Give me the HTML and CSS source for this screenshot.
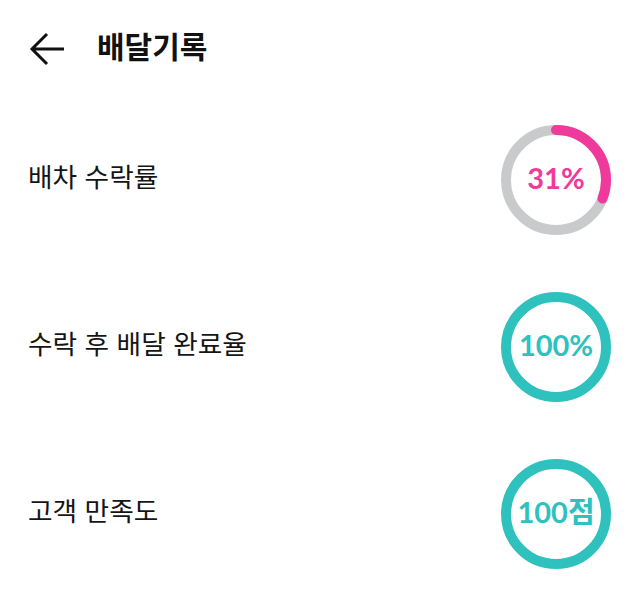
FILE: index.html
```html
<!DOCTYPE html>
<html lang="ko">
<head>
<meta charset="utf-8">
<link rel="stylesheet" href="styles.css">
</head>
<body>
<header class="header">
  <svg class="back" width="40" height="40" viewBox="0 0 40 40">
    <path d="M37 20H5M20 5L5 20L20 35" fill="none" stroke="#111" stroke-width="3" stroke-linecap="butt" stroke-linejoin="miter"/>
  </svg>
  <h1 class="title">배달기록</h1>
</header>
<main>
  <div class="row">
    <span class="label">배차 수락률</span>
    <div class="ring">
      <svg width="112" height="112" viewBox="0 0 112 112">
        <circle cx="56" cy="56" r="50" fill="none" stroke="#c9cacc" stroke-width="10"/>
        <circle class="arc" cx="56" cy="56" r="50" fill="none" stroke="#f03a9b" stroke-width="10" stroke-linecap="round" stroke-dasharray="97.4 400" transform="rotate(-90 56 56)"/>
      </svg>
      <span class="value pink">31%</span>
    </div>
  </div>
  <div class="row">
    <span class="label">수락 후 배달 완료율</span>
    <div class="ring">
      <svg width="112" height="112" viewBox="0 0 112 112">
        <circle cx="56" cy="56" r="50" fill="none" stroke="#2ec1be" stroke-width="10"/>
      </svg>
      <span class="value teal">100%</span>
    </div>
  </div>
  <div class="row">
    <span class="label">고객 만족도</span>
    <div class="ring">
      <svg width="112" height="112" viewBox="0 0 112 112">
        <circle cx="56" cy="56" r="50" fill="none" stroke="#2ec1be" stroke-width="10"/>
      </svg>
      <span class="value teal">100점</span>
    </div>
  </div>
</main>
</body>
</html>
```
FILE: styles.css
```css
html, body {
  margin: 0;
  padding: 0;
  background: #fff;
}
body {
  width: 640px;
  font-family: "Noto Sans CJK KR", "Noto Sans", sans-serif;
  color: #111;
}
.header {
  height: 96px;
  display: flex;
  align-items: center;
  padding-left: 27px;
  box-sizing: border-box;
}
.back {
  display: block;
  margin-top: 1px;
}
.title {
  margin: -6px 0 0 30px;
  font-size: 30px;
  font-weight: 700;
  line-height: 1;
}
.row {
  height: 167px;
  display: flex;
  align-items: center;
  justify-content: space-between;
  padding: 0 28px 0 28px;
  box-sizing: border-box;
}
.label {
  font-size: 26.7px;
  line-height: 1;
  color: #151515;
  margin-top: -6px;
}
.ring {
  display: grid;
  place-items: center;
  width: 112px;
  height: 112px;
}
.ring svg, .ring .value {
  grid-area: 1 / 1;
}
.ring svg {
  display: block;
}
.value {
  font-family: Lato, "Noto Sans CJK KR", sans-serif;
  font-weight: 700;
  font-size: 29px;
  line-height: 1;
  margin-top: -4px;
}
.pink { color: #f03a9b; }
.teal { color: #2ec1be; }
```
